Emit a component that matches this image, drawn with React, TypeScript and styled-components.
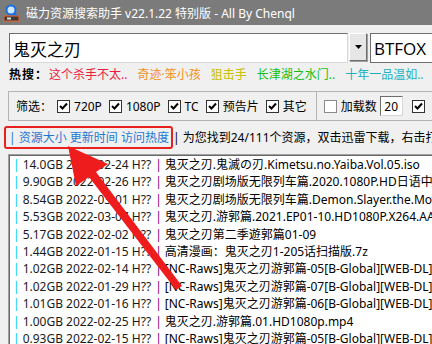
import React from "react";
import styled, { createGlobalStyle } from "styled-components";

const Global = createGlobalStyle`
  html, body { margin: 0; padding: 0; background: #f0f0f0; }
  body { font-family: "Noto Sans", "Noto Sans CJK SC", sans-serif; }
`;

const Window = styled.div`
  position: relative;
  width: 432px;
  height: 344px;
  overflow: hidden;
  background: #f0f0f0;
  display: flex;
  flex-direction: column;
  font-size: 12px;
`;

const TitleBar = styled.div`
  height: 25px;
  flex: none;
  background: #7b7b7b;
  display: flex;
  align-items: center;
  gap: 5px;
  padding-left: 3px;
  color: #fff;
  font-size: 12px;
  white-space: nowrap;
`;

const Body = styled.div`
  display: flex;
  flex-direction: column;
  padding: 8px 0 0 9px;
  min-width: 0;
`;

const SearchRow = styled.div`
  display: flex;
  align-items: flex-start;
  gap: 1px;
  height: 30px;
`;

const SearchInput = styled.div`
  width: 334px;
  height: 28px;
  background: #fff;
  border: 1px solid #6e6e6e;
  border-right-color: #d8d8d8;
  border-bottom-color: #d8d8d8;
  display: flex;
  align-items: center;
  padding-left: 3px;
  font-family: "Noto Sans CJK SC", sans-serif;
  font-size: 17px;
  color: #000;
  flex: none;
`;

const DropButton = styled.div`
  width: 16px;
  height: 26px;
  background: #e6e6e6;
  border: 1px solid #fff;
  border-right-color: #6e6e6e;
  border-bottom-color: #6e6e6e;
  box-shadow: 1px 1px 0 #a0a0a0;
  display: flex;
  align-items: center;
  justify-content: center;
  flex: none;
`;

const EngineBox = styled.div`
  margin-left: 2px;
  width: 80px;
  height: 28px;
  background: #fff;
  border: 1px solid #6e6e6e;
  display: flex;
  align-items: center;
  padding-left: 3px;
  font-family: "Open Sans", "Noto Sans", sans-serif;
  font-size: 17px;
  color: #000;
  flex: none;
`;

const HotRow = styled.div`
  display: flex;
  align-items: center;
  height: 22px;
  margin-top: 1px;
  white-space: nowrap;
  line-height: 16px;
`;

const HotLabel = styled.span`
  font-weight: bold;
  color: #000;
  margin-right: 1px;
  letter-spacing: 1px;
`;

const HotLink = styled.span<{ $color: string }>`
  color: ${(p) => p.$color};
  margin-right: 10px;
`;

const FilterBox = styled.div`
  margin-top: 5px;
  margin-left: -1px;
  height: 28px;
  border: 1px solid #b4b4b4;
  border-right: none;
  display: flex;
  align-items: center;
  white-space: nowrap;
`;

const FilterGroup = styled.div<{ $divided?: boolean }>`
  display: flex;
  align-items: center;
  height: 100%;
  padding-left: 7px;
  padding-right: ${(p) => (p.$divided ? "0" : "2px")};
  ${(p) => (p.$divided ? "border-left: 1px solid #b4b4b4;" : "")}
`;

const FilterLabel = styled.span`
  color: #000;
  margin-right: 5px;
`;

const CheckItem = styled.label<{ $last?: boolean }>`
  display: flex;
  align-items: center;
  gap: 4px;
  margin-right: ${(p) => (p.$last ? "0" : "7px")};
  color: #000;
`;

const Box = styled.span<{ $checked: boolean }>`
  width: 11px;
  height: 11px;
  background: #fff;
  border: 1px solid ${(p) => (p.$checked ? "#333" : "#8a8a8a")};
  display: inline-flex;
  align-items: center;
  justify-content: center;
  flex: none;
`;

const NumInput = styled.span`
  width: 21px;
  height: 18px;
  background: #fff;
  border: 1px solid #6e6e6e;
  border-right-color: #d8d8d8;
  border-bottom-color: #d8d8d8;
  display: inline-flex;
  align-items: center;
  justify-content: center;
  margin: 0 9px 0 3px;
  color: #000;
`;

const SortRow = styled.div`
  display: flex;
  align-items: center;
  height: 24px;
  margin-top: 4px;
  margin-left: -5px;
  white-space: nowrap;
`;

const SortBox = styled.div`
  border: 2.5px solid #e82020;
  border-radius: 3px;
  height: 19px;
  display: flex;
  align-items: center;
  padding: 0 2px 0 3px;
  color: #1e78d2;
`;

const Info = styled.span`
  color: #000;
`;

const ResultList = styled.div`
  margin-top: 5px;
  margin-left: -1px;
  height: 200px;
  background: #fff;
  border: 1px solid #a0a0a0;
  border-right: none;
  border-bottom: none;
  box-shadow: inset 1px 1px 0 #696969;
  padding: 1px 0 0 4px;
  display: flex;
  flex-direction: column;
`;

const Row = styled.div`
  height: 17.4px;
  line-height: 17.4px;
  white-space: nowrap;
  display: flex;
  color: #000;
`;

const Bar = styled.span<{ $color: string }>`
  color: ${(p) => p.$color};
  margin-right: 3px;
`;

const Meta = styled.span`
  color: #1a1a1a;
  margin-right: 4px;
`;

const Arrow = styled.svg`
  position: absolute;
  left: 0;
  top: 0;
  pointer-events: none;
`;

const rows = [
  ["14.0GB 2022-02-24 H??", "鬼灭之刃.鬼滅の刃.Kimetsu.no.Yaiba.Vol.05.iso"],
  ["9.90GB 2022-02-26 H??", "鬼灭之刃剧场版无限列车篇.2020.1080P.HD日语中字"],
  ["8.54GB 2022-03-01 H??", "鬼灭之刃剧场版无限列车篇.Demon.Slayer.the.Movie"],
  ["5.53GB 2022-03-07 H??", "鬼灭之刃.游郭篇.2021.EP01-10.HD1080P.X264.AAC"],
  ["5.17GB 2022-02-02 H??", "鬼灭之刃第二季遊郭篇01-09"],
  ["1.44GB 2022-01-15 H??", "高清漫画：鬼灭之刃1-205话扫描版.7z"],
  ["1.02GB 2022-02-14 H??", "[NC-Raws]鬼灭之刃游郭篇-05[B-Global][WEB-DL]"],
  ["1.02GB 2022-01-29 H??", "[NC-Raws]鬼灭之刃游郭篇-07[B-Global][WEB-DL]"],
  ["1.01GB 2022-01-16 H??", "[NC-Raws]鬼灭之刃游郭篇-06[B-Global][WEB-DL]"],
  ["1.00GB 2022-02-25 H??", "鬼灭之刃.游郭篇.01.HD1080p.mp4"],
  ["0.93GB 2022-02-15 H??", "[NC-Raws]鬼灭之刃游郭篇-05[B-Global][WEB-DL]"],
];

const hot: [string, string][] = [
  ["这个杀手不太..", "#ee1c3c"],
  ["奇迹·笨小孩", "#f09020"],
  ["狙击手", "#c8c000"],
  ["长津湖之水门..", "#10c010"],
  ["十年一品温如..", "#20b0c0"],
];

const Check = ({ on }: { on: boolean }) => (
  <Box $checked={on}>
    {on && (
      <svg width="9" height="9" viewBox="0 0 9 9">
        <path d="M1 4 L3.5 6.5 L8 1.5" stroke="#000" strokeWidth="2" fill="none" />
      </svg>
    )}
  </Box>
);

const AppIcon = () => (
  <svg width="18" height="18" viewBox="0 0 18 18">
    <circle cx="8" cy="6" r="4.5" fill="#cfe6ff" stroke="#1a6fe0" strokeWidth="2" />
    <path d="M10.5 9 L14 12.5" stroke="#1a6fe0" strokeWidth="2.5" />
    <rect x="1" y="12" width="15" height="5" fill="#3a3a3a" stroke="#f06020" strokeWidth="1" />
    <rect x="4" y="13.5" width="4" height="2" fill="#dddddd" />
  </svg>
);

export default function App() {
  return (
    <Window>
      <Global />
      <TitleBar>
        <AppIcon />
        <span>磁力资源搜索助手 v22.1.22 特别版 - All By Chenql</span>
      </TitleBar>
      <Body>
        <SearchRow>
          <SearchInput>鬼灭之刃</SearchInput>
          <DropButton>
            <svg width="7" height="4" viewBox="0 0 7 4">
              <path d="M0 0 H7 L3.5 4 Z" fill="#000" />
            </svg>
          </DropButton>
          <EngineBox>BTFOX</EngineBox>
        </SearchRow>
        <HotRow>
          <HotLabel>热搜：</HotLabel>
          {hot.map(([t, c]) => (
            <HotLink key={t} $color={c}>
              {t}
            </HotLink>
          ))}
        </HotRow>
        <FilterBox>
          <FilterGroup>
            <FilterLabel>筛选：</FilterLabel>
            {["720P", "1080P", "TC", "预告片", "其它"].map((t) => (
              <CheckItem key={t}>
                <Check on={true} />
                {t}
              </CheckItem>
            ))}
          </FilterGroup>
          <FilterGroup $divided>
            <CheckItem $last>
              <Check on={false} />
              加载数
            </CheckItem>
            <NumInput>20</NumInput>
            <Check on={true} />
          </FilterGroup>
        </FilterBox>
        <SortRow>
          <SortBox>| 资源大小 更新时间 访问热度</SortBox>
          <Info>| 为您找到24/111个资源，双击迅雷下载，右击打开</Info>
        </SortRow>
        <ResultList>
          {rows.map(([m, t], i) => (
            <Row key={i}>
              <Bar $color="#00c8f0">|</Bar>
              <Meta>{m}</Meta>
              <Bar $color="#800080">|</Bar>
              <span>{t}</span>
            </Row>
          ))}
        </ResultList>
      </Body>
      <Arrow width="432" height="344" viewBox="0 0 432 344">
        <path
          d="M68 146 L108 164 L96 172 L182 286 L176 290 L89 177 L76 186 Z"
          fill="#ee1c1c"
        />
      </Arrow>
    </Window>
  );
}
